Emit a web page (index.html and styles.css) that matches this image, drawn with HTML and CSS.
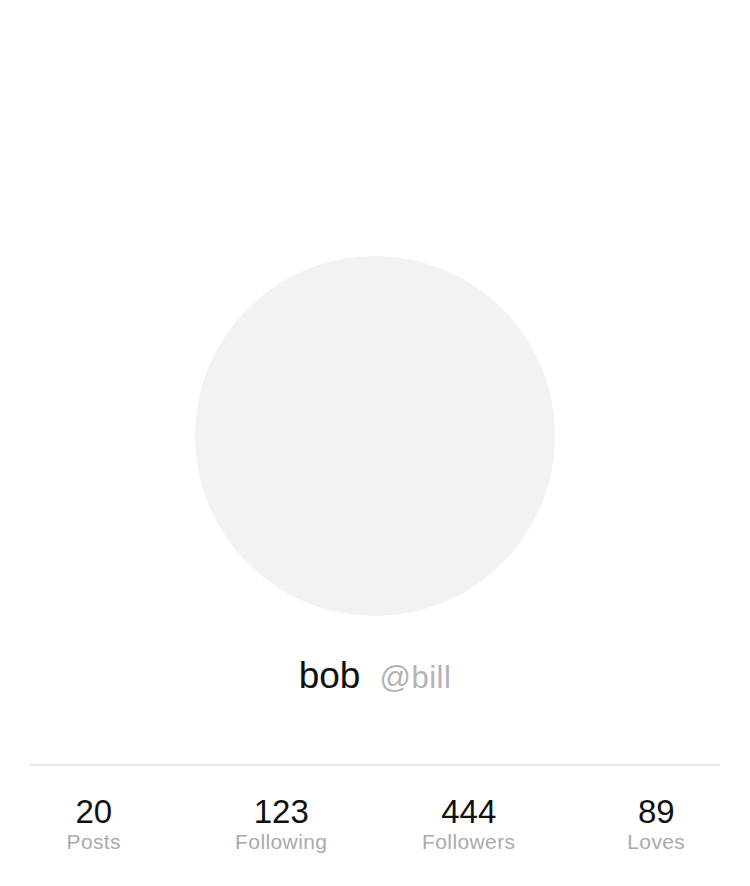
FILE: index.html
```html
<!DOCTYPE html>
<html>
<head>
<meta charset="utf-8">
<link rel="stylesheet" href="styles.css">
</head>
<body>
<div class="profile">
  <div class="avatar"></div>
  <div class="names">
    <span class="name">bob</span>
    <span class="handle">@bill</span>
  </div>
  <div class="divider"></div>
  <div class="stats">
    <div class="stat"><div class="num">20</div><div class="label">Posts</div></div>
    <div class="stat"><div class="num">123</div><div class="label">Following</div></div>
    <div class="stat"><div class="num">444</div><div class="label">Followers</div></div>
    <div class="stat"><div class="num">89</div><div class="label">Loves</div></div>
  </div>
</div>
</body>
</html>
```
FILE: styles.css
```css
html, body {
  margin: 0;
  padding: 0;
  background: #fff;
  font-family: "Liberation Sans", Arial, sans-serif;
}
.profile {
  width: 750px;
  padding-top: 256px;
  display: flex;
  flex-direction: column;
  align-items: center;
}
.avatar {
  width: 360px;
  height: 360px;
  border-radius: 50%;
  background: #f2f2f2;
}
.names {
  display: flex;
  align-items: baseline;
  gap: 19px;
  margin-top: 36px;
  line-height: 48px;
}
.name {
  font-size: 37px;
  color: #111;
}
.handle {
  font-size: 31px;
  letter-spacing: 0.5px;
  color: #b3b3b3;
}
.divider {
  align-self: stretch;
  margin: 62px 30px 0;
  height: 2px;
  background: #e6e6e6;
}
.stats {
  align-self: stretch;
  display: grid;
  grid-template-columns: repeat(4, 1fr);
  margin-top: 28px;
}
.stat {
  display: flex;
  flex-direction: column;
  align-items: center;
}
.num {
  font-size: 33px;
  line-height: 36px;
  color: #111;
}
.label {
  font-size: 21px;
  letter-spacing: 0.4px;
  line-height: 24px;
  color: #aaaaaa;
}
```
